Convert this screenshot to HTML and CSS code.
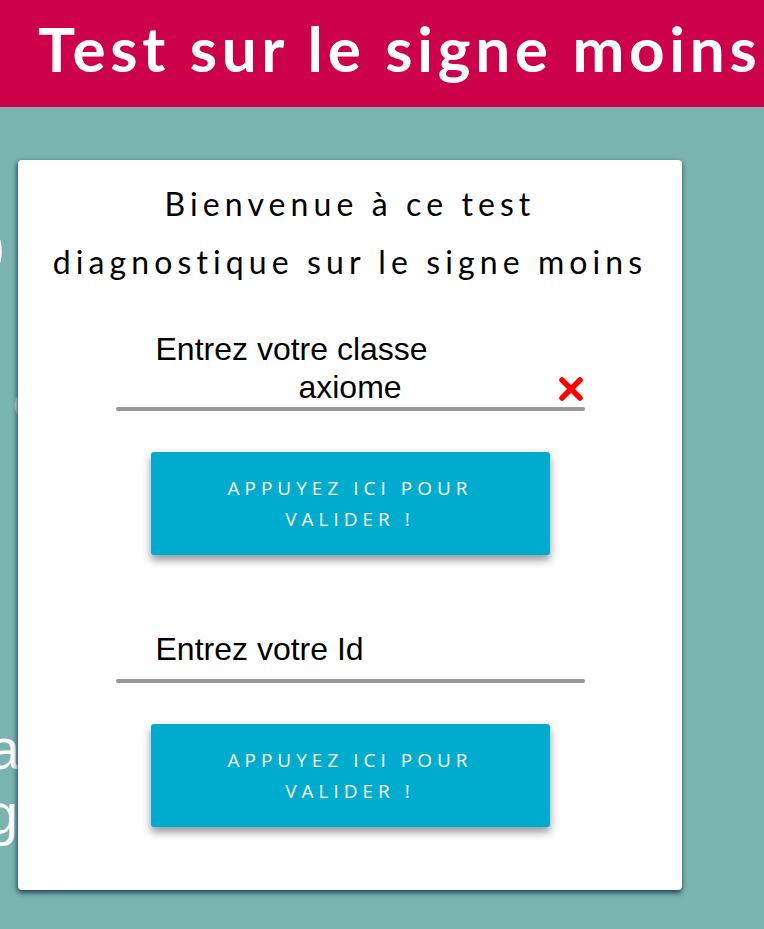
FILE: index.html
```html
<!DOCTYPE html>
<html lang="fr">
<head>
<meta charset="utf-8">
<title>Test sur le signe moins</title>
<link rel="stylesheet" href="styles.css">
</head>
<body>
<header class="topbar">
  <h1 class="topbar-title">Test sur le signe moins</h1>
</header>
<main class="stage">
  <div class="backdrop" aria-hidden="true">
    <span class="bg-glyph bg-o">O</span>
    <span class="bg-glyph bg-c">c</span>
    <span class="bg-glyph bg-a">a</span>
    <span class="bg-glyph bg-g">g</span>
  </div>
  <section class="card">
    <h2 class="card-title">Bienvenue à ce test<br>diagnostique sur le signe moins</h2>

    <div class="field">
      <div class="field-label">Entrez votre classe</div>
      <div class="field-row">
        <span class="field-value">axiome</span>
        <svg class="clear-icon" viewBox="0 0 28 28" width="28" height="28">
          <path d="M5 5 L23 23 M23 5 L5 23" stroke="#ff0000" stroke-width="5.5" stroke-linecap="round"/>
        </svg>
      </div>
      <div class="field-line"></div>
    </div>
    <button class="btn">APPUYEZ ICI POUR<br>VALIDER !</button>

    <div class="field field-id">
      <div class="field-label">Entrez votre Id</div>
      <div class="field-line"></div>
    </div>
    <button class="btn">APPUYEZ ICI POUR<br>VALIDER !</button>
  </section>
</main>
</body>
</html>
```
FILE: styles.css
```css
html, body {
  margin: 0;
  padding: 0;
}
body {
  background: #79b4b0;
  width: 764px;
  height: 929px;
  overflow: hidden;
  font-family: "Open Sans", "DejaVu Sans", sans-serif;
}
.topbar {
  background: #cc004b;
  height: 107px;
  overflow: hidden;
  white-space: nowrap;
}
.topbar-title {
  margin: 0;
  padding-left: 38px;
  padding-top: 6px;
  color: #ffffff;
  font-family: "Lato", sans-serif;
  font-weight: 700;
  font-size: 62px;
  line-height: 84px;
  letter-spacing: 4.7px;
}
.stage {
  position: relative;
  padding: 53px 0 0 18px;
}
.backdrop {
  position: absolute;
  left: 0;
  top: 0;
  width: 100px;
  height: 820px;
  color: #ffffff;
  font-family: "Liberation Sans", sans-serif;
}
.bg-glyph {
  position: absolute;
  line-height: 1;
}
.bg-o {
  left: -64px;
  top: 100px;
  font-size: 90px;
  font-weight: 300;
}
.bg-c {
  left: 13px;
  top: 275px;
  font-size: 40px;
  color: #d8d8d8;
}
.bg-a {
  left: -12px;
  top: 613px;
  font-size: 58px;
}
.bg-g {
  left: -14px;
  top: 678px;
  font-size: 58px;
}
.card {
  position: relative;
  width: 664px;
  height: 730px;
  box-sizing: border-box;
  background: #ffffff;
  border-radius: 4px;
  box-shadow: 0 3px 5px rgba(20, 50, 70, 0.75), -2px 1px 4px rgba(20, 50, 70, 0.35);
  display: flex;
  flex-direction: column;
  align-items: center;
  padding-top: 15px;
}
.card-title {
  margin: 0;
  text-align: center;
  font-family: "Lato", sans-serif;
  font-weight: 400;
  font-size: 32px;
  line-height: 58px;
  letter-spacing: 5.1px;
  color: #000000;
}
.field {
  width: 469px;
  margin-top: 41px;
  font-family: "Liberation Sans", Arial, sans-serif;
  color: #000000;
}
.field-label {
  font-size: 32px;
  line-height: 34px;
  padding-left: 40px;
}
.field-row {
  position: relative;
  height: 41px;
  box-sizing: border-box;
  padding-top: 4px;
  display: flex;
  align-items: flex-start;
  justify-content: center;
}
.field-value {
  font-size: 32px;
  line-height: 34px;
}
.clear-icon {
  position: absolute;
  right: 0;
  top: 9px;
}
.field-line {
  height: 4px;
  background: #999999;
  border-radius: 2px;
}
.field-id {
  margin-top: 77px;
}
.field-id .field-label {
  margin-bottom: 13px;
}
.btn {
  margin-top: 41px;
  width: 399px;
  height: 103px;
  flex-shrink: 0;
  border: none;
  border-radius: 3px;
  background: #00acce;
  color: #ffffff;
  font-family: "Open Sans", sans-serif;
  font-size: 19px;
  line-height: 31px;
  letter-spacing: 5px;
  box-shadow: 0 5px 9px rgba(30, 40, 60, 0.5);
  padding: 0;
}
```
